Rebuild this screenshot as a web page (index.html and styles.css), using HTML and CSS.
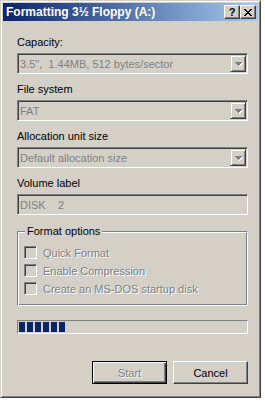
FILE: index.html
```html
<!DOCTYPE html>
<html lang="en">

<head>
  <meta charset="UTF-8" />
  <title>Formatting 3½ Floppy (A:)</title>
  <link rel="stylesheet" href="styles.css">
</head>

<body>
  <div class="window">
    <div class="titlebar">
      <span class="title">Formatting 3½ Floppy (A:)</span>
      <div class="caption-buttons">
        <span class="cap-btn help">?</span>
        <span class="cap-btn close">
          <svg width="8" height="7" viewBox="0 0 8 7">
            <path d="M0 0h2v1h-2zM1 1h2v1h-2zM2 2h4v1h-4zM3 3h2v1h-2zM2 4h4v1h-4zM1 5h2v1h-2zM0 6h2v1h-2zM6 0h2v1h-2zM5 1h2v1h-2zM5 5h2v1h-2zM6 6h2v1h-2z" fill="#000" />
          </svg>
        </span>
      </div>
    </div>

    <div class="client">
      <div class="field">
        <div class="label">Capacity:</div>
        <div class="combo">
          <span class="combo-text">3.5",  1.44MB, 512 bytes/sector</span>
          <span class="drop"><svg width="7" height="4" viewBox="0 0 7 4"><path d="M0 0h7v1h-1v1h-1v1h-1v1h-1v-1h-1v-1h-1v-1h-1z" fill="#808080" /></svg></span>
        </div>
      </div>

      <div class="field">
        <div class="label">File system</div>
        <div class="combo">
          <span class="combo-text">FAT</span>
          <span class="drop"><svg width="7" height="4" viewBox="0 0 7 4"><path d="M0 0h7v1h-1v1h-1v1h-1v1h-1v-1h-1v-1h-1v-1h-1z" fill="#808080" /></svg></span>
        </div>
      </div>

      <div class="field">
        <div class="label">Allocation unit size</div>
        <div class="combo">
          <span class="combo-text">Default allocation size</span>
          <span class="drop"><svg width="7" height="4" viewBox="0 0 7 4"><path d="M0 0h7v1h-1v1h-1v1h-1v1h-1v-1h-1v-1h-1v-1h-1z" fill="#808080" /></svg></span>
        </div>
      </div>

      <div class="field">
        <div class="label">Volume label</div>
        <div class="combo">
          <span class="combo-text">DISK    2</span>
        </div>
      </div>

      <div class="group">
        <div class="legend">Format options</div>
        <div class="check-row"><span class="checkbox"></span><span class="check-label">Quick Format</span></div>
        <div class="check-row"><span class="checkbox"></span><span class="check-label">Enable Compression</span></div>
        <div class="check-row"><span class="checkbox"></span><span class="check-label">Create an MS-DOS startup disk</span></div>
      </div>

      <div class="progress">
        <span class="block"></span>
        <span class="block"></span>
        <span class="block"></span>
        <span class="block"></span>
        <span class="block"></span>
        <span class="block"></span>
      </div>

      <div class="buttons">
        <div class="button default"><span>Start</span></div>
        <div class="button">Cancel</div>
      </div>
    </div>
  </div>
</body>

</html>
```

FILE: styles.css
```css
body {
  margin: 0;
  padding: 0;
  background-color: #ffffff;
  font-family: 'Liberation Sans', Arial, sans-serif;
  font-size: 11px;
  color: #000000;
}

/* Outer dialog frame, classic 3D look */
.window {
  width: 261px;
  height: 398px;
  box-sizing: border-box;
  background-color: #d4d0c8;
  border: 1px solid;
  border-color: #d4d0c8 #404040 #404040 #d4d0c8;
  box-shadow: inset 1px 1px #ffffff, inset -1px -1px #808080;
  padding: 2px;
}

.titlebar {
  height: 18px;
  display: flex;
  align-items: center;
  background: linear-gradient(to right, #0a246a, #a6caf0);
  padding-left: 3px;
  margin-bottom: 1px;
}

.title {
  color: #ffffff;
  font-weight: 700;
  font-size: 12px;
  white-space: nowrap;
}

.caption-buttons {
  margin-left: auto;
  margin-right: 2px;
  display: flex;
}

.cap-btn {
  width: 16px;
  height: 14px;
  box-sizing: border-box;
  background-color: #d4d0c8;
  border: 1px solid;
  border-color: #ffffff #404040 #404040 #ffffff;
  box-shadow: inset -1px -1px #808080;
  display: flex;
  align-items: center;
  justify-content: center;
}

.cap-btn.help {
  font-weight: 700;
  font-size: 11px;
  line-height: 12px;
}

.client {
  padding: 14px 10px 0 14px;
}

.field + .field {
  margin-top: 9px;
}

.label {
  height: 13px;
  line-height: 13px;
  margin-bottom: 4px;
}

/* Disabled combo / edit box, sunken frame */
.combo {
  height: 21px;
  box-sizing: border-box;
  border: 1px solid;
  border-color: #808080 #ffffff #ffffff #808080;
  box-shadow: inset 1px 1px #404040, inset -1px -1px #d4d0c8;
  display: flex;
  align-items: center;
  padding-left: 2px;
  color: #808080;
}

.combo-text {
  white-space: pre;
}

.drop {
  margin-left: auto;
  margin-right: 1px;
  width: 16px;
  height: 17px;
  box-sizing: border-box;
  background-color: #d4d0c8;
  border: 1px solid;
  border-color: #d4d0c8 #404040 #404040 #d4d0c8;
  box-shadow: inset 1px 1px #ffffff, inset -1px -1px #808080;
  display: flex;
  align-items: center;
  justify-content: center;
}

.drop svg {
  filter: drop-shadow(1px 1px 0 #ffffff);
}

/* Etched group box */
.group {
  margin-top: 16px;
  height: 75px;
  box-sizing: border-box;
  border: 1px solid;
  border-color: #808080 #ffffff #ffffff #808080;
  box-shadow: inset 1px 1px #ffffff, inset -1px -1px #808080;
  padding: 0 6px;
}

.legend {
  margin-top: -7px;
  margin-left: 1px;
  width: fit-content;
  padding: 0 2px;
  background-color: #d4d0c8;
  line-height: 13px;
  margin-bottom: 8px;
}

.check-row {
  display: flex;
  align-items: center;
  height: 13px;
  margin-bottom: 5px;
}

.checkbox {
  width: 13px;
  height: 13px;
  box-sizing: border-box;
  border: 1px solid;
  border-color: #808080 #ffffff #ffffff #808080;
  box-shadow: inset 1px 1px #404040, inset -1px -1px #d4d0c8;
  background-color: #d4d0c8;
  margin-right: 6px;
}

.check-label {
  color: #808080;
  text-shadow: 1px 1px 0 #ffffff;
}

.progress {
  margin-top: 14px;
  height: 14px;
  box-sizing: border-box;
  border: 1px solid;
  border-color: #808080 #ffffff #ffffff #808080;
  padding: 1px;
  display: flex;
  gap: 2px;
}

.block {
  width: 6px;
  height: 10px;
  background-color: #0a246a;
}

.buttons {
  margin-top: 27px;
  display: flex;
  justify-content: flex-end;
  gap: 6px;
}

.button {
  width: 75px;
  height: 23px;
  box-sizing: border-box;
  border: 1px solid;
  border-color: #ffffff #404040 #404040 #ffffff;
  box-shadow: inset -1px -1px #808080;
  display: flex;
  align-items: center;
  justify-content: center;
}

/* Default push button gets a black frame */
.button.default {
  border: 1px solid #000000;
  box-shadow: inset 1px 1px #ffffff, inset -1px -1px #404040, inset -2px -2px #808080;
}

.button.default span {
  color: #808080;
  text-shadow: 1px 1px 0 #ffffff;
}
```
